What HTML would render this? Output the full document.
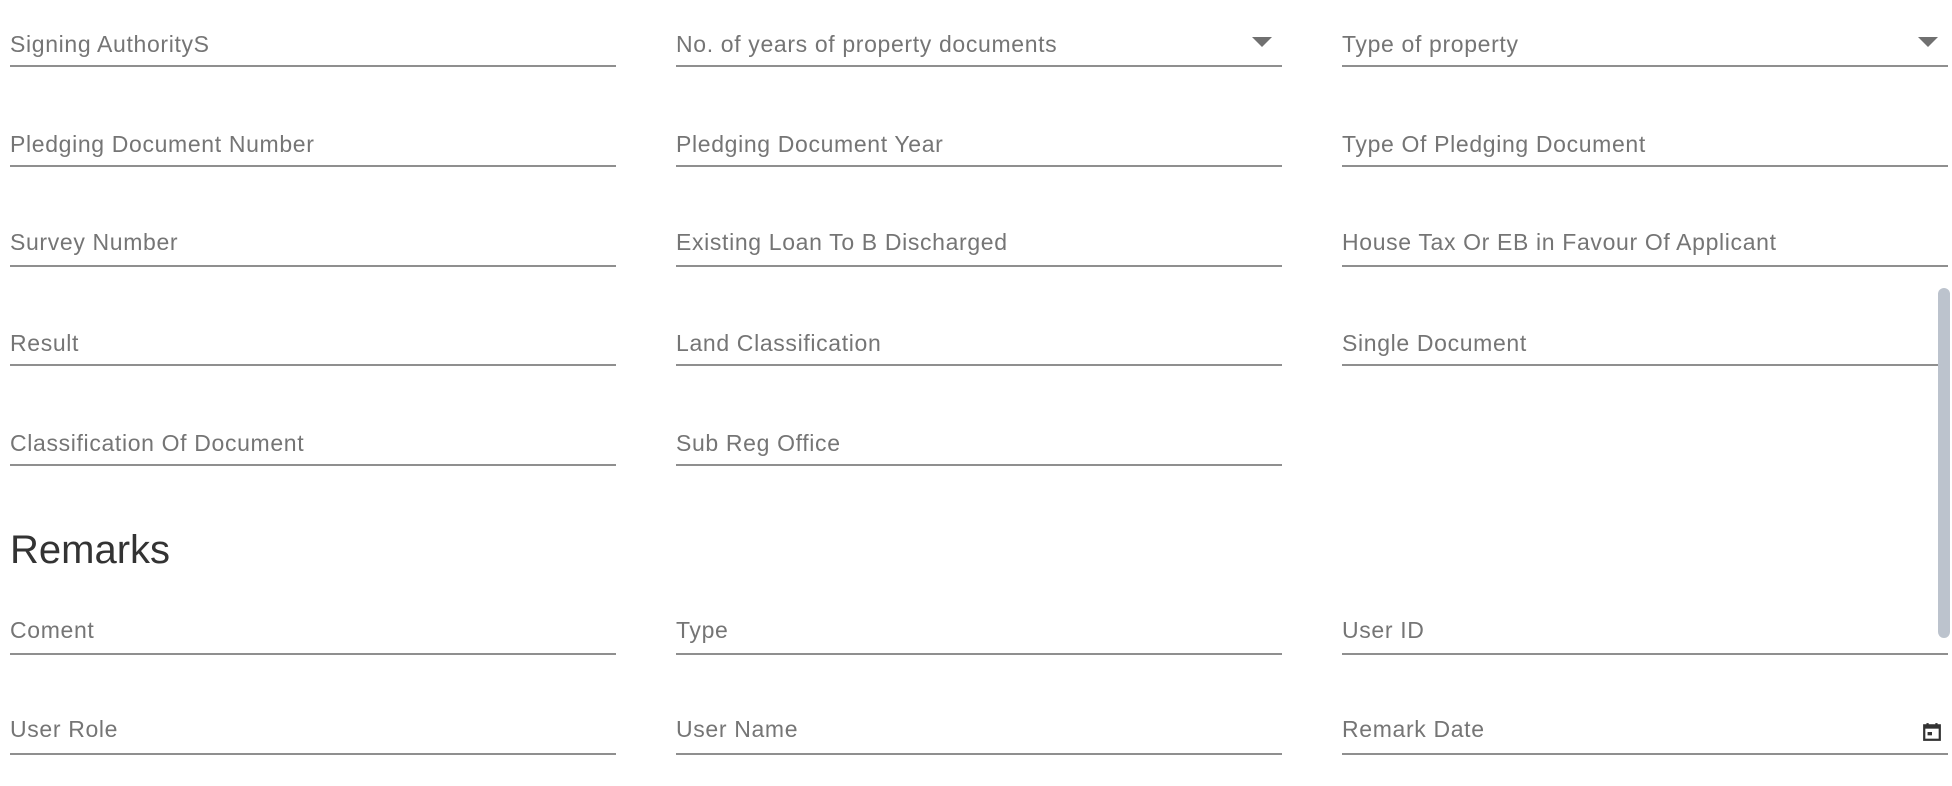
<!DOCTYPE html>
<html><head><meta charset="utf-8"><style>
html,body{margin:0;padding:0;background:#fff;width:1952px;height:786px;overflow:hidden;position:relative;font-family:"Liberation Sans",sans-serif}
.f{position:absolute;width:606px;height:40px;border-bottom:2px solid #8f8f8f;box-sizing:border-box}
.f span{position:absolute;left:0;bottom:7px;font-size:23px;letter-spacing:0.65px;color:#757575;white-space:nowrap}
.arr{position:absolute;right:10px;bottom:18px;width:0;height:0;border-left:10px solid transparent;border-right:10px solid transparent;border-top:10px solid #707070}
h2{position:absolute;left:10px;top:528px;margin:0;font-size:40px;font-weight:normal;color:#333}
.sb{position:absolute;left:1938px;top:288px;width:12px;height:350px;background:#bcc3cd;border-radius:6px;z-index:2}
</style></head><body>
<div class="f" style="left:10px;top:27px"><span>Signing AuthorityS</span></div>
<div class="f" style="left:676px;top:27px"><span>No. of years of property documents</span><div class="arr"></div></div>
<div class="f" style="left:1342px;top:27px"><span>Type of property</span><div class="arr"></div></div>
<div class="f" style="left:10px;top:127px"><span>Pledging Document Number</span></div>
<div class="f" style="left:676px;top:127px"><span>Pledging Document Year</span></div>
<div class="f" style="left:1342px;top:127px"><span>Type Of Pledging Document</span></div>
<div class="f" style="left:10px;top:227px"><span style="bottom:9px">Survey Number</span></div>
<div class="f" style="left:676px;top:227px"><span style="bottom:9px">Existing Loan To B Discharged</span></div>
<div class="f" style="left:1342px;top:227px"><span style="bottom:9px">House Tax Or EB in Favour Of Applicant</span></div>
<div class="f" style="left:10px;top:326px"><span>Result</span></div>
<div class="f" style="left:676px;top:326px"><span>Land Classification</span></div>
<div class="f" style="left:1342px;top:326px"><span>Single Document</span></div>
<div class="f" style="left:10px;top:426px"><span>Classification Of Document</span></div>
<div class="f" style="left:676px;top:426px"><span>Sub Reg Office</span></div>
<h2>Remarks</h2>
<div class="f" style="left:10px;top:615px"><span style="bottom:9px">Coment</span></div>
<div class="f" style="left:676px;top:615px"><span style="bottom:9px">Type</span></div>
<div class="f" style="left:1342px;top:615px"><span style="bottom:9px">User ID</span></div>
<div class="f" style="left:10px;top:715px"><span style="bottom:10px">User Role</span></div>
<div class="f" style="left:676px;top:715px"><span style="bottom:10px">User Name</span></div>
<div class="f" style="left:1342px;top:715px"><span style="bottom:10px">Remark Date</span>
<svg style="position:absolute;right:6px;bottom:11px" width="20" height="20" viewBox="0 0 18 18"><rect x="2" y="3" width="14" height="13" fill="none" stroke="#333" stroke-width="2"/><rect x="2" y="3" width="14" height="3" fill="#333"/><rect x="4" y="1" width="2" height="3" fill="#333"/><rect x="12" y="1" width="2" height="3" fill="#333"/><rect x="5" y="9" width="4" height="3" fill="#333"/></svg></div>
<div class="sb"></div>
</body></html>
